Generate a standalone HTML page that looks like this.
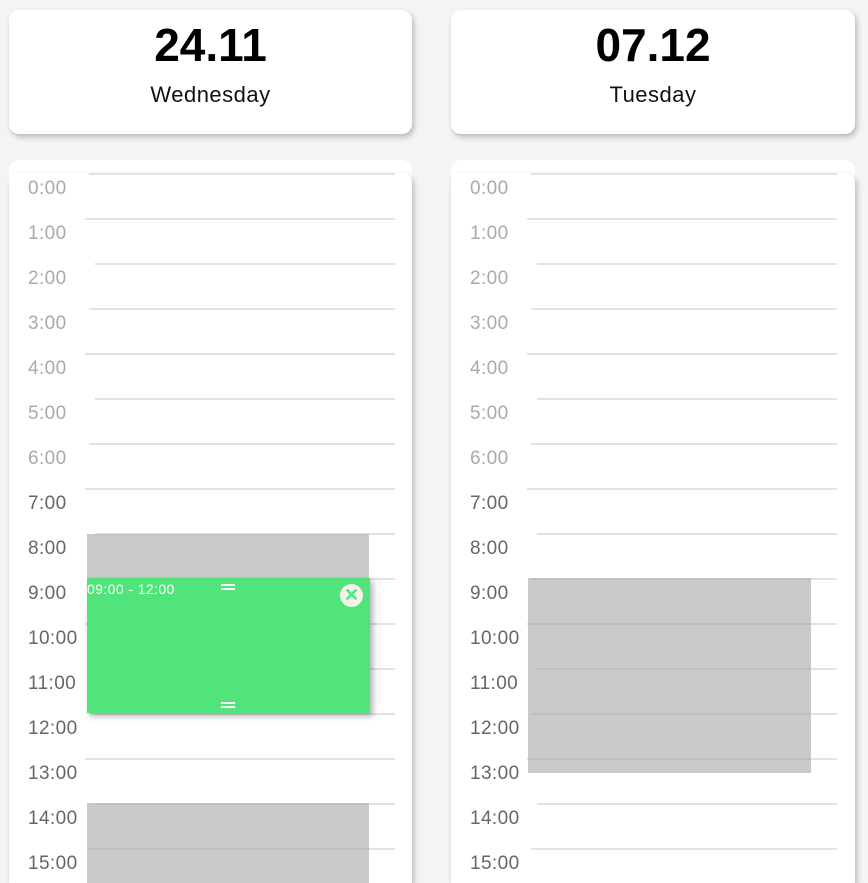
<!DOCTYPE html>
<html style="overflow:hidden;height:883px"><head><style>
body{margin:0;width:868px;height:883px;background:#f4f4f4;overflow:hidden;position:relative;font-family:"Liberation Sans",sans-serif}
.hd{position:absolute;top:10px;height:124px;background:#fff;border-radius:10px;box-shadow:2px 3px 6px rgba(0,0,0,.25);text-align:center}
.hd .d{font-size:46px;font-weight:bold;margin-top:10px;line-height:50px;color:#000}
.hd .w{font-size:22px;margin-top:12px;color:#111;letter-spacing:0.5px}
.bk{position:absolute;top:160px;height:40px;background:#fff;border-radius:10px}
.cd{position:absolute;top:173px;height:710px;background:#fff;border-radius:10px 10px 0 0;box-shadow:2px 3px 6px rgba(0,0,0,.25);overflow:hidden}
.ln{position:absolute;height:2px;background:#e2e2e2}
.lb{position:absolute;font-size:19px;left:19px;width:70px;letter-spacing:0.4px}
.g{position:absolute;background:rgba(170,170,170,.62)}
.gr{position:absolute;background:#51e47b;box-shadow:3px 3px 6px rgba(0,0,0,.3);color:#fff}
</style></head><body>
<div class="hd" style="left:9px;width:403px"><div class="d">24.11</div><div class="w">Wednesday</div></div>
<div class="hd" style="left:451px;width:404px"><div class="d">07.12</div><div class="w">Tuesday</div></div>
<div class="bk" style="left:9px;width:403px"></div>
<div class="bk" style="left:451px;width:404px"></div>
<div class="cd" id="c1" style="left:9px;width:403px"></div>
<div class="cd" id="c2" style="left:451px;width:404px"></div>
<script>
function fill(id,w){var c=document.getElementById(id),h='';
for(var k=0;k<16;k++){var y=45*k;var x=(k%3==0?80:(k%3==1?76:86));
h+='<div class="ln" style="top:'+y+'px;left:'+x+'px;width:'+(w-x)+'px"></div>';
h+='<div class="lb" style="top:'+(y+5)+'px;color:'+(k<7?'#aaa':'#666')+'">'+k+':00</div>';}
c.innerHTML=h;}
fill('c1',386);fill('c2',386);
</script>
<div class="g" style="left:87px;top:534px;width:282px;height:179px"></div>
<div class="g" style="left:87px;top:803px;width:282px;height:80px"></div>
<div class="g" style="left:528px;top:578px;width:283px;height:195px"></div>
<div class="gr" style="left:87px;top:578px;width:283px;height:135px">
<div style="position:absolute;left:0;top:3px;font-size:14px;letter-spacing:0.4px">09:00 - 12:00</div>
<div style="position:absolute;left:134px;top:6px;width:14px;height:2px;background:#fff;box-shadow:0 4px 0 #fff"></div>
<div style="position:absolute;left:134px;top:124px;width:14px;height:2px;background:#fff;box-shadow:0 4px 0 #fff"></div>
<div style="position:absolute;left:253px;top:6px;width:23px;height:23px;border-radius:50%;background:#f5efed;color:#51e47b;font-weight:bold;font-size:18px;line-height:23px;text-align:center">✕</div>
</div>
</body></html>
